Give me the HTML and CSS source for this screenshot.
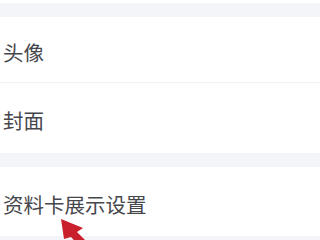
FILE: index.html
```html
<!DOCTYPE html>
<html lang="zh-CN">
<head>
    <meta charset="UTF-8">
    <meta name="viewport" content="width=device-width, initial-scale=1.0">
    <title>资料设置</title>
    <link rel="stylesheet" href="styles.css">
</head>
<body>
    <div class="page">
        <div class="gap"></div>
        <div class="group">
            <div class="row row-first">头像</div>
            <div class="row">封面</div>
        </div>
        <div class="gap"></div>
        <div class="group">
            <div class="row row-card">资料卡展示设置</div>
        </div>
        <div class="gap"></div>

        <svg class="arrow" width="60" height="40" viewBox="0 0 60 40">
            <polygon points="3,3 25,12 19,16 34,31 28,37 13,21 6,23" fill="#c9202b"/>
        </svg>
    </div>
</body>
</html>
```

FILE: styles.css
```css
* {
    margin: 0;
    padding: 0;
    box-sizing: border-box;
}

body {
    background: #ffffff;
    font-family: "Noto Sans CJK SC", "Noto Sans", sans-serif;
}

.page {
    position: relative;
    width: 320px;
    height: 240px;
    overflow: hidden;
    padding-top: 3px;
}

.gap {
    height: 14px;
    background: #f4f5f8;
}

.group {
    background: #ffffff;
}

.row {
    display: flex;
    align-items: center;
    height: 70px;
    padding-left: 3px;
    padding-top: 4px;
    font-size: 20.5px;
    color: #46474c;
}

.row-first {
    height: 66px;
    border-bottom: 1px solid #f1f2f4;
}

.row-card {
    height: 69px;
}

.arrow {
    position: absolute;
    left: 58px;
    top: 216px;
}
```
